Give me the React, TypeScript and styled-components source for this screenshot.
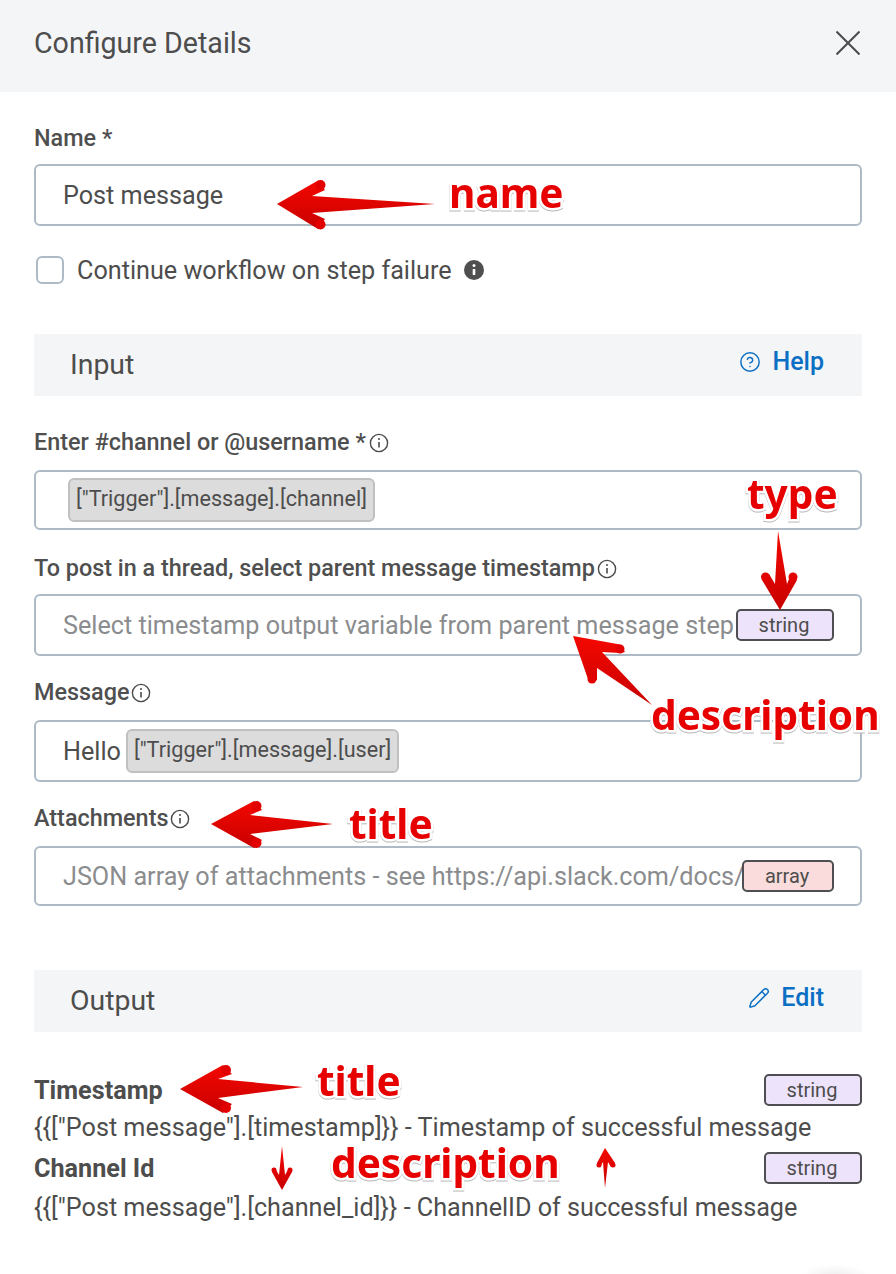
import React from "react";
import styled, { createGlobalStyle } from "styled-components";
import { CircleHelp, Pencil } from "lucide-react";

const Global = createGlobalStyle`
  html, body { margin: 0; padding: 0; background: #fff; }
  body { font-family: Roboto, "Liberation Sans", sans-serif; color: #4d4d4d; }
`;

const Page = styled.div`
  position: relative;
  width: 896px;
  height: 1274px;
  overflow: hidden;
  background: #fff;
`;

const Header = styled.header`
  box-sizing: border-box;
  height: 92px;
  background: #f4f5f7;
  padding: 0 36px 6px 34px;
  display: flex;
  align-items: center;
  justify-content: space-between;
`;

const HeaderTitle = styled.h1`
  margin: 0;
  font-size: 28.6px;
  font-weight: 400;
  color: #4d4d4d;
`;

const Body = styled.main`
  padding: 0 34px;
  display: flex;
  flex-direction: column;
`;

const Label = styled.label<{ $top: number; $gap?: number }>`
  display: flex;
  align-items: center;
  height: 28px;
  margin-top: ${(p) => p.$top}px;
  margin-bottom: ${(p) => p.$gap ?? 12}px;
  font-size: 23.4px;
  font-weight: 500;
  color: #4f4f4f;
  white-space: nowrap;
`;

const Field = styled.div<{ $h: number; $pad?: number }>`
  box-sizing: border-box;
  height: ${(p) => p.$h}px;
  border: 2px solid #adb9c5;
  border-radius: 6px;
  display: flex;
  align-items: center;
  padding: 0 26px 0 ${(p) => p.$pad ?? 27}px;
  font-size: 25.2px;
  color: #4d4d4d;
  background: #fff;
  white-space: nowrap;
`;

const Placeholder = styled.span`
  flex: 1;
  min-width: 0;
  overflow: hidden;
  color: #8a8c8e;
`;

const Chip = styled.span`
  box-sizing: border-box;
  height: 44px;
  display: inline-flex;
  align-items: center;
  padding: 0 6px 3px;
  background: #dcdcdc;
  border: 2px solid #bfc0c0;
  border-radius: 6px;
  font-size: 21.6px;
  color: #4d4d4d;
`;

const HelloText = styled.span`
  margin-right: 5px;
`;

const TypePill = styled.span<{ $kind: "string" | "array"; $w: number }>`
  box-sizing: border-box;
  flex-shrink: 0;
  width: ${(p) => p.$w}px;
  height: 32px;
  padding-right: 2px;
  display: flex;
  align-items: center;
  justify-content: center;
  border: 2px solid #4f4f53;
  border-radius: 5px;
  font-size: 20px;
  color: #4d4d4d;
  background: ${(p) => (p.$kind === "string" ? "#ede4fb" : "#fbdcdc")};
`;

const CheckRow = styled.div`
  display: flex;
  align-items: center;
  margin-top: 30px;
  padding-left: 2px;
  height: 28px;
  font-size: 25.2px;
  color: #4d4d4d;
`;

const CheckBox = styled.span`
  box-sizing: border-box;
  width: 28px;
  height: 28px;
  border: 2px solid #adb9c5;
  border-radius: 6px;
  margin-right: 13px;
`;

const SectionBar = styled.section<{ $top: number }>`
  box-sizing: border-box;
  height: 62px;
  margin-top: ${(p) => p.$top}px;
  background: #f4f5f7;
  padding: 0 38px 0 36px;
  display: flex;
  align-items: center;
  justify-content: space-between;
`;

const SectionTitle = styled.h2`
  margin: -2px 0 0;
  font-size: 28.4px;
  font-weight: 400;
  color: #4d4d4d;
`;

const SectionLink = styled.a`
  display: flex;
  align-items: center;
  gap: 11px;
  margin-top: -7px;
  font-size: 25px;
  font-weight: 500;
  color: #0b6fc4;
`;

const OutputRow = styled.div<{ $top: number }>`
  display: flex;
  align-items: center;
  justify-content: space-between;
  height: 32px;
  margin-top: ${(p) => p.$top}px;
`;

const OutputTitle = styled.strong`
  font-size: 25.2px;
  font-weight: 700;
  color: #4d4d4d;
`;

const OutputDesc = styled.p<{ $top: number }>`
  margin: ${(p) => p.$top}px 0 0;
  height: 36px;
  line-height: 36px;
  font-size: 25.2px;
  color: #4d4d4d;
  white-space: nowrap;
`;

const CornerGlow = styled.div`
  position: absolute;
  left: 800px;
  top: 1264px;
  width: 70px;
  height: 24px;
  background: radial-gradient(closest-side, #efefef, rgba(255, 255, 255, 0));
`;

const Overlay = styled.svg`
  position: absolute;
  inset: 0;
  width: 896px;
  height: 1274px;
  pointer-events: none;
`;

const Note = styled.span<{ $x: number; $y: number }>`
  position: absolute;
  left: ${(p) => p.$x}px;
  top: ${(p) => p.$y}px;
  font-family: "Noto Sans", "Open Sans", sans-serif;
  font-weight: 700;
  font-size: 40.6px;
  line-height: 50px;
  color: #e60000;
  -webkit-text-stroke: 5px #fff;
  paint-order: stroke fill;
  filter: drop-shadow(0 1px 0 #b5b5b5);
  white-space: nowrap;
`;

const OutlineInfo = ({ ml = 2 }: { ml?: number }) => (
  <svg width="20" height="20" viewBox="0 0 20 20" style={{ marginLeft: ml, marginTop: 2 }} fill="none">
    <circle cx="10" cy="10" r="8.6" stroke="#4a4a4a" strokeWidth="1.4" />
    <path d="M10 9v5.5" stroke="#4a4a4a" strokeWidth="1.6" />
    <circle cx="10" cy="6" r="1" fill="#4a4a4a" />
  </svg>
);

const SolidInfo = () => (
  <svg width="20" height="20" viewBox="0 0 20 20" style={{ marginLeft: 12 }}>
    <circle cx="10" cy="10" r="10" fill="#4f4f4f" />
    <path d="M10 9v6" stroke="#fff" strokeWidth="2.6" />
    <circle cx="10" cy="5.6" r="1.5" fill="#fff" />
  </svg>
);

const CloseIcon = () => (
  <svg width="24" height="24" viewBox="0 0 24 24">
    <path d="M0.5 0.5l23 23M23.5 0.5l-23 23" stroke="#4a4a4a" strokeWidth="2" fill="none" />
  </svg>
);

const arrows: { pts: string; caps: [number, number, number][] }[] = [
  { pts: "277,204 318,180.5 325,190 312,196 435,204 312,213 325,219 318,229", caps: [[320.5, 185, 5], [320.5, 224.5, 5]] },
  { pts: "778,531 775,584 769,574 762,580 780,610 797,580 791,574 787,584", caps: [[765.5, 577, 4.5], [793, 577, 4.5]] },
  { pts: "573,636 620,644.5 625,652 620,653 602,652 652,705 597,668 597,680 589,682", caps: [[620, 649, 4.5], [592, 679, 4.5]] },
  { pts: "211,824 254,801 262,810 250,815 333,824 250,834 262,840 254,848", caps: [[256.5, 806, 5], [256.5, 843, 5]] },
  { pts: "180,1089 223,1065 232,1074 218,1079 303,1087 218,1098 232,1104 223,1113", caps: [[226, 1070, 5], [226, 1108, 5]] },
  { pts: "282,1146 279,1175 275,1168 272,1172 282,1190 292,1172 289,1168 285,1175", caps: [[274, 1170, 2.5], [290, 1170, 2.5]] },
  { pts: "605,1148 597,1163 600,1167 603,1162 605,1188 608,1162 611,1167 615,1163", caps: [[599, 1165, 2.5], [613, 1165, 2.5]] },
];

export default function App() {
  return (
    <Page>
      <Global />
      <Header>
        <HeaderTitle>Configure Details</HeaderTitle>
        <CloseIcon />
      </Header>
      <Body>
        <Label $top={32}>Name *</Label>
        <Field $h={62}>Post message</Field>
        <CheckRow>
          <CheckBox />
          Continue workflow on step failure
          <SolidInfo />
        </CheckRow>
        <SectionBar $top={50}>
          <SectionTitle>Input</SectionTitle>
          <SectionLink>
            <CircleHelp size={22} strokeWidth={1.6} />
            Help
          </SectionLink>
        </SectionBar>
        <Label $top={32} $gap={14}>
          Enter #channel or @username *<OutlineInfo ml={3} />
        </Label>
        <Field $h={60} $pad={32}>
          <Chip>["Trigger"].[message].[channel]</Chip>
        </Field>
        <Label $top={24}>
          To post in a thread, select parent message timestamp
          <OutlineInfo />
        </Label>
        <Field $h={62}>
          <Placeholder>Select timestamp output variable from parent message step</Placeholder>
          <TypePill $kind="string" $w={98}>string</TypePill>
        </Field>
        <Label $top={22} $gap={14}>
          Message
          <OutlineInfo />
        </Label>
        <Field $h={62}>
          <HelloText>Hello</HelloText>
          <Chip>["Trigger"].[message].[user]</Chip>
        </Field>
        <Label $top={22} $gap={14}>
          Attachments
          <OutlineInfo />
        </Label>
        <Field $h={60}>
          <Placeholder>JSON array of attachments - see https://api.slack.com/docs/message-attachments</Placeholder>
          <TypePill $kind="array" $w={92}>array</TypePill>
        </Field>
        <SectionBar $top={64}>
          <SectionTitle>Output</SectionTitle>
          <SectionLink>
            <Pencil size={22} strokeWidth={1.6} />
            Edit
          </SectionLink>
        </SectionBar>
        <OutputRow $top={42}>
          <OutputTitle>Timestamp</OutputTitle>
          <TypePill $kind="string" $w={98}>string</TypePill>
        </OutputRow>
        <OutputDesc $top={4}>{'{{["Post message"].[timestamp]}} - Timestamp of successful message'}</OutputDesc>
        <OutputRow $top={6}>
          <OutputTitle>Channel Id</OutputTitle>
          <TypePill $kind="string" $w={98}>string</TypePill>
        </OutputRow>
        <OutputDesc $top={6}>{'{{["Post message"].[channel_id]}} - ChannelID of successful message'}</OutputDesc>
      </Body>
      <CornerGlow />
      <Overlay viewBox="0 0 896 1274">
        <defs>
          <linearGradient id="red" x1="0" y1="0" x2="0" y2="1">
            <stop offset="0" stopColor="#f40800" />
            <stop offset="1" stopColor="#c80000" />
          </linearGradient>
        </defs>
        {arrows.map((a, i) => (
          <g key={i}>
            <polygon points={a.pts} fill="url(#red)" />
            {a.caps.map(([x, y, r], j) => (
              <circle key={j} cx={x} cy={y} r={r} fill="#e20000" />
            ))}
          </g>
        ))}
      </Overlay>
      <Note $x={449} $y={168}>name</Note>
      <Note $x={747} $y={469}>type</Note>
      <Note $x={651} $y={690}>description</Note>
      <Note $x={349} $y={799}>title</Note>
      <Note $x={317} $y={1056}>title</Note>
      <Note $x={331} $y={1138}>description</Note>
    </Page>
  );
}
